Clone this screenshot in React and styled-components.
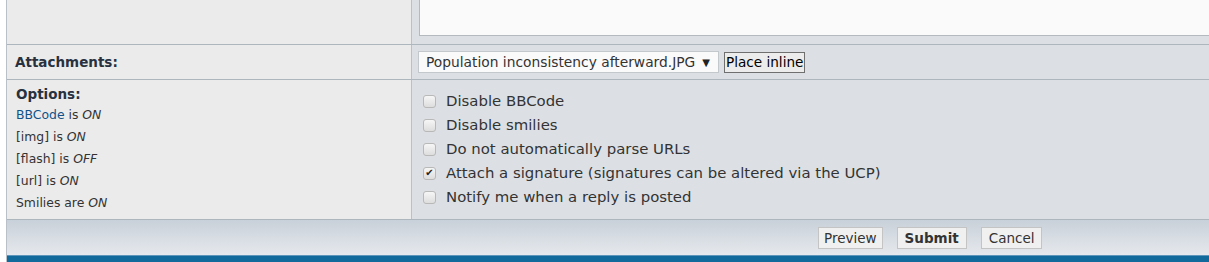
import React from 'react';
import styled, { createGlobalStyle } from 'styled-components';

const Global = createGlobalStyle`
  html, body {
    margin: 0;
    padding: 0;
    background: #ffffff;
    overflow: hidden;
  }
  body {
    width: 1209px;
    height: 262px;
    font-family: "DejaVu Sans", Verdana, sans-serif;
  }
`;

const Panel = styled.div`
  margin-left: 6px;
  margin-top: -10px;
  width: 1230px;
  border-left: 1px solid #b9c0c7;
`;

const Row = styled.div`
  display: grid;
  grid-template-columns: 405px 1fr;
  border-bottom: 1px solid #aeb6bd;
  height: ${p => p.$h || 'auto'};
`;

const LabelCell = styled.div`
  background: #ebebeb;
  border-right: 1px solid #b9c0c7;
  padding: ${p => p.$pad || '0 8px'};
  display: flex;
  flex-direction: column;
  justify-content: ${p => p.$center ? 'center' : 'flex-start'};
`;

const FieldCell = styled.div`
  background: #dce0e5;
  padding: ${p => p.$pad || '0'};
  display: flex;
  flex-direction: ${p => p.$col ? 'column' : 'row'};
  align-items: ${p => p.$col ? 'stretch' : 'center'};
`;

const Label = styled.div`
  font-weight: bold;
  font-size: 13.5px;
  color: #28313f;
`;

const TextArea = styled.div`
  height: 44px;
  background: #fafafa;
  border: 1px solid #b4b9bf;
  border-right: none;
`;

const Select = styled.div`
  width: 301px;
  height: 22px;
  box-sizing: border-box;
  background: #fafafa;
  border: 1px solid #c3c8cd;
  display: flex;
  align-items: center;
  padding: 0 8px 0 7px;
  font-size: 13.8px;
  color: #333;
  justify-content: space-between;
  white-space: nowrap;
`;

const Arrow = styled.span`
  font-size: 10px;
  color: #222;
`;

const PlainButton = styled.button`
  font-family: "DejaVu Sans", Verdana, sans-serif;
  font-size: 13.6px;
  color: #000;
  background: #ececec;
  border: 1px solid #6f6f6f;
  height: 21px;
  padding: 0 1px;
  margin-left: 5px;
`;

const InfoLine = styled.div`
  font-size: 12.4px;
  color: #333;
  line-height: 22px;
  em { font-style: italic; }
`;

const Link = styled.a`
  color: #105289;
  text-decoration: none;
`;

const Check = styled.label`
  display: flex;
  align-items: center;
  height: 24px;
  font-size: 14.9px;
  color: #333;
  gap: 10px;
`;

const Box = styled.span`
  width: 11px;
  height: 11px;
  border: 1px solid #b8b8b8;
  border-radius: 3px;
  background: linear-gradient(#f6f6f6, #dddddd);
  display: inline-flex;
  align-items: center;
  justify-content: center;
  font-size: 10px;
  line-height: 1;
  color: #222;
  flex: none;
`;

const Footer = styled.div`
  height: 35px;
  background: linear-gradient(#c8d0d9, #e6e9ed);
  display: flex;
  align-items: center;
  padding-left: 811px;
  gap: 14px;
`;

const FootButton = styled.button`
  font-family: "DejaVu Sans", Verdana, sans-serif;
  font-size: 13.5px;
  font-weight: ${p => p.$bold ? 'bold' : 'normal'};
  color: #333;
  background: #f0f0f0;
  border: 1px solid #c4c4c4;
  height: 22px;
  padding: 0 ${p => p.$padX || '5px'};
`;

const BlueBar = styled.div`
  height: 7px;
  background: #12699b;
  border-top: 1px solid #5d95bb;
`;

const options = [
  { text: 'Disable BBCode' },
  { text: 'Disable smilies' },
  { text: 'Do not automatically parse URLs' },
  { text: 'Attach a signature (signatures can be altered via the UCP)', checked: true },
  { text: 'Notify me when a reply is posted' },
];

export default function App() {
  return (
    <>
      <Global />
      <Panel>
        <Row $h="54px">
          <LabelCell />
          <FieldCell $col $pad="0 0 7px 7px">
            <TextArea />
          </FieldCell>
        </Row>
        <Row $h="34px">
          <LabelCell $center>
            <Label>Attachments:</Label>
          </LabelCell>
          <FieldCell $pad="0 0 0 6px">
            <Select>
              Population inconsistency afterward.JPG <Arrow>▼</Arrow>
            </Select>
            <PlainButton>Place inline</PlainButton>
          </FieldCell>
        </Row>
        <Row $h="139px">
          <LabelCell $pad="6px 9px 0 9px">
            <Label>Options:</Label>
            <InfoLine style={{ marginTop: '2px' }}>
              <Link href="#">BBCode</Link> is <em>ON</em>
            </InfoLine>
            <InfoLine>[img] is <em>ON</em></InfoLine>
            <InfoLine>[flash] is <em>OFF</em></InfoLine>
            <InfoLine>[url] is <em>ON</em></InfoLine>
            <InfoLine>Smilies are <em>ON</em></InfoLine>
          </LabelCell>
          <FieldCell $col $pad="9px 0 0 11px">
            {options.map(o => (
              <Check key={o.text}>
                <Box>{o.checked ? '✔' : ''}</Box>
                {o.text}
              </Check>
            ))}
          </FieldCell>
        </Row>
        <Footer>
          <FootButton>Preview</FootButton>
          <FootButton $bold $padX="7px">Submit</FootButton>
          <FootButton $padX="7px">Cancel</FootButton>
        </Footer>
        <BlueBar />
      </Panel>
    </>
  );
}
